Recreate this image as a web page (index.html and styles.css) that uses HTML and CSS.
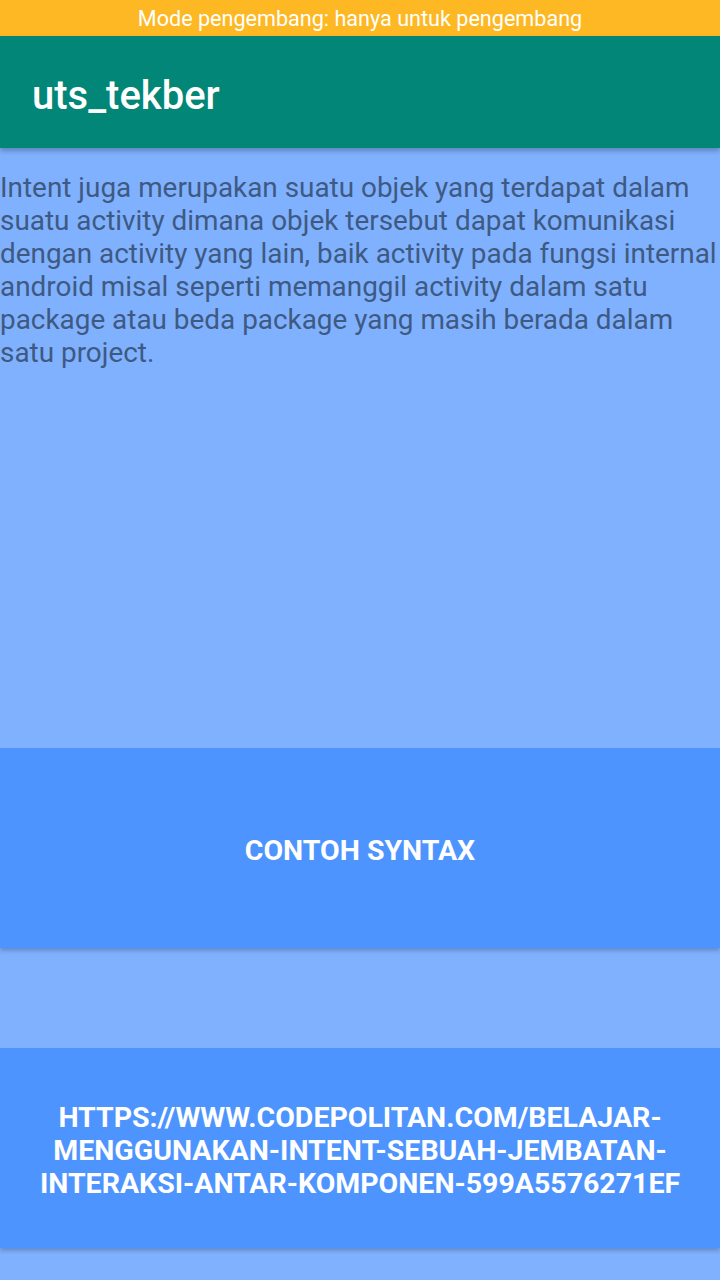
FILE: index.html
```html
<!DOCTYPE html>
<html>
<head>
<meta charset="utf-8">
<link rel="stylesheet" href="styles.css">
</head>
<body>
<div class="status">Mode pengembang: hanya untuk pengembang</div>
<header class="appbar"><h1 class="title">uts_tekber</h1></header>
<main class="content">
  <p class="desc">Intent juga merupakan suatu objek yang terdapat dalam suatu activity dimana objek tersebut dapat komunikasi dengan activity yang lain, baik activity pada fungsi internal android misal seperti memanggil activity dalam satu package atau beda package yang masih berada dalam satu project.</p>
  <button class="btn">CONTOH SYNTAX</button>
  <div class="gap"></div>
  <button class="btn">HTTPS://WWW.CODEPOLITAN.COM/BELAJAR-MENGGUNAKAN-INTENT-SEBUAH-JEMBATAN-INTERAKSI-ANTAR-KOMPONEN-599A5576271EF</button>
</main>
</body>
</html>
```
FILE: styles.css
```css
html, body {
  margin: 0;
  padding: 0;
  width: 720px;
  height: 1280px;
  overflow: hidden;
  font-family: Roboto, "Noto Sans", sans-serif;
  background: #80b1ff;
}
.status {
  height: 36px;
  background: #fdb823;
  color: #fff;
  font-size: 21.6px;
  line-height: 38px;
  text-align: center;
}
.appbar {
  height: 112px;
  box-sizing: border-box;
  background: #028677;
  box-shadow: 0 3px 5px rgba(0,0,0,0.25);
  display: flex;
  align-items: center;
  padding: 6px 0 0 32px;
  position: relative;
  z-index: 1;
}
.title {
  margin: 0;
  color: #fff;
  font-size: 40px;
  font-weight: 500;
}
.content {
  display: flex;
  flex-direction: column;
  background: #80b1ff;
}
.desc {
  margin: 0;
  height: 600px;
  box-sizing: border-box;
  padding-top: 23px;
  font-size: 27.9px;
  line-height: 33px;
  color: #3e5a82;
}
.btn {
  height: 200px;
  width: 720px;
  border: none;
  margin: 0;
  background: #4d94ff;
  color: #fff;
  font-family: Roboto, sans-serif;
  font-size: 28.5px;
  font-weight: 700;
  line-height: 33px;
  padding: 4px 24px 0;
  box-shadow: 0 3px 4px rgba(0,0,0,0.2);
  text-align: center;
}
.gap {
  height: 100px;
}
```
